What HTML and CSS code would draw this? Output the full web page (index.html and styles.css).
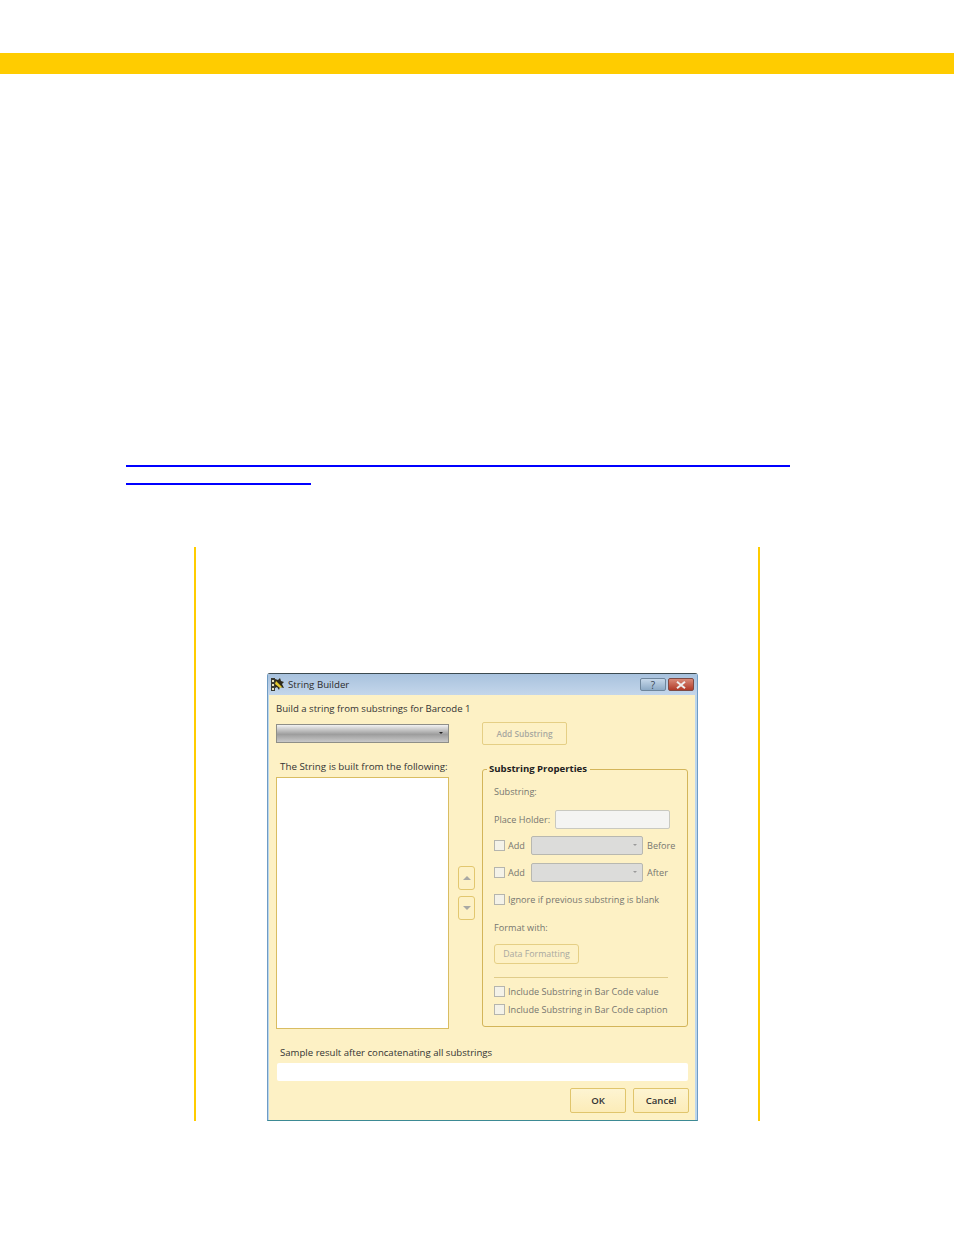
FILE: index.html
```html
<!DOCTYPE html>
<html lang="en">
<head>
<meta charset="utf-8">
<title>String Builder</title>
<link rel="stylesheet" href="styles.css">
</head>
<body>
<div class="band"></div>
<div class="links">
  <div class="link-line long"></div>
  <div class="link-line short"></div>
</div>
<section class="callout">
  <div class="dialog">
    <header class="titlebar">
      <svg class="app-icon" width="15" height="15" viewBox="0 0 15 15">
        <rect x="1" y="1" width="4" height="13" fill="#3a3a30"/>
        <rect x="2" y="3" width="2" height="2" fill="#e8e4c0"/>
        <rect x="2" y="7" width="2" height="2" fill="#e8e4c0"/>
        <rect x="2" y="11" width="2" height="2" fill="#e8e4c0"/>
        <path d="M5 2l3 1 2-2 1 3 3 1-2 2 2 4-4-1-1 3-2-3-2 1z" fill="#2d2a1c"/>
        <path d="M6 4l6 6-2 1-5-4z" fill="#e3c92e"/>
      </svg>
      <span class="title">String Builder</span>
      <div class="win-buttons">
        <div class="win-btn help">?</div>
        <div class="win-btn close">
          <svg width="12" height="8" viewBox="0 0 12 8"><path d="M2 0.8l8 6.4M10 0.8l-8 6.4" stroke="#eeeeee" stroke-width="2"/></svg>
        </div>
      </div>
    </header>
    <div class="content">
      <p class="intro">Build a string from substrings for Barcode 1</p>
      <div class="top-row">
        <div class="main-combo"><span class="caret dark"></span></div>
        <div class="btn add-btn">Add Substring</div>
      </div>
      <div class="columns">
        <div class="left-col">
          <p class="list-label">The String is built from the following:</p>
          <div class="listbox"></div>
        </div>
        <div class="arrows">
          <div class="arrow-btn"><span class="tri up"></span></div>
          <div class="arrow-btn"><span class="tri down"></span></div>
        </div>
        <div class="group">
          <span class="legend">Substring Properties</span>
          <p class="muted sub-label">Substring:</p>
          <div class="row ph-row">
            <span class="muted">Place Holder:</span>
            <div class="input"></div>
          </div>
          <div class="row add-row first">
            <span class="check"></span><span class="muted add-word">Add</span>
            <div class="combo"><span class="caret"></span></div>
            <span class="muted">Before</span>
          </div>
          <div class="row add-row">
            <span class="check"></span><span class="muted add-word">Add</span>
            <div class="combo"><span class="caret"></span></div>
            <span class="muted">After</span>
          </div>
          <div class="row ignore-row">
            <span class="check"></span><span class="muted">Ignore if previous substring is blank</span>
          </div>
          <p class="muted format-label">Format with:</p>
          <div class="btn format-btn">Data Formatting</div>
          <div class="rule"></div>
          <div class="row include-row">
            <span class="check"></span><span class="muted">Include Substring in Bar Code value</span>
          </div>
          <div class="row include-row">
            <span class="check"></span><span class="muted">Include Substring in Bar Code caption</span>
          </div>
        </div>
      </div>
      <p class="sample-label">Sample result after concatenating all substrings</p>
      <div class="sample-box"></div>
      <div class="actions">
        <div class="btn action">OK</div>
        <div class="btn action">Cancel</div>
      </div>
    </div>
  </div>
</section>
</body>
</html>
```
FILE: styles.css
```css
* { box-sizing: border-box; }
html, body { margin: 0; padding: 0; background: #fff; }
body {
  height: 1235px;
  overflow: hidden;
  font-family: "Open Sans", "Noto Sans", sans-serif;
  font-size: 9.6px;
  color: #3a3a34;
}
p { margin: 0; }

.band { margin-top: 53px; height: 21px; background: #ffcc00; }

.links { margin: 391px 0 0 126px; height: 82px; }
.link-line { height: 2px; background: #0000ff; }
.link-line.long { width: 664px; }
.link-line.short { width: 185px; margin-top: 16px; }

.callout {
  margin-left: 194px;
  width: 566px;
  height: 574px;
  padding: 126px 0 0 71px;
  border-left: 2px solid #ffcc00;
  border-right: 2px solid #ffcc00;
}

.dialog {
  width: 431px;
  height: 448px;
  display: flex;
  flex-direction: column;
  border: 1px solid #6f9cc4;
  border-top: 1px solid #3c4a50;
  border-bottom: 1px solid #3d8a94;
  border-radius: 3px 3px 0 0;
  background: #fdf1c5;
}

.titlebar {
  height: 21px;
  flex: none;
  display: flex;
  align-items: center;
  padding: 0 3px 0 2px;
  background: linear-gradient(#a8c2de, #c4d6ea);
}
.app-icon { flex: none; }
.title { margin-left: 3px; font-size: 9.7px; color: #2c2c2c; }
.win-buttons { margin-left: auto; display: flex; gap: 2px; }
.win-btn {
  height: 13px;
  display: flex;
  align-items: center;
  justify-content: center;
  border: 1px solid #6f869c;
  border-radius: 2px;
}
.win-btn.help { width: 26px; background: linear-gradient(#c6d8ea, #8daac6); color: #3a4654; font-size: 10px; line-height: 1; }
.win-btn.close { width: 26px; background: linear-gradient(#d98a78, #b13a28); border-color: #7f4a44; }

.content { flex: 1; padding: 7px 8px 0 8px; box-shadow: inset 1px 0 #bcd6ec, inset -2px 0 #bcd6ec; }
.intro { height: 13px; line-height: 13px; color: #333; }

.top-row { display: flex; margin-top: 7px; height: 24px; align-items: flex-start; }
.main-combo {
  width: 173px;
  height: 19px;
  margin-top: 2px;
  position: relative;
  border: 1px solid #8f8f88;
  background: linear-gradient(#f2f2f2, #9d9d9d 55%, #c9c9c9);
}
.caret {
  position: absolute;
  right: 5px;
  top: 7px;
  width: 0;
  height: 0;
  border: 2.5px solid transparent;
  border-top-color: #9a9a9a;
  border-bottom: 0;
}
.caret.dark { border-top-color: #222; }

.btn {
  display: flex;
  align-items: center;
  justify-content: center;
  border: 1px solid #e5cf85;
  border-radius: 2px;
  background: #fdf1c5;
}
.add-btn {
  width: 85px;
  height: 23px;
  margin-left: 33px;
  color: #a8a8a0;
  font-weight: 600;
  font-size: 8.3px;
}

.columns { display: flex; margin-top: 23px; height: 260px; }
.left-col { width: 173px; }
.list-label { height: 11px; line-height: 11px; margin-top: -8px; padding-left: 4px; color: #333; white-space: nowrap; font-size: 9.8px; }
.listbox { width: 173px; height: 252px; margin-top: 5px; background: #fff; border: 1px solid #d9bd62; }

.arrows { width: 17px; margin-left: 9px; padding-top: 97px; display: flex; flex-direction: column; gap: 6px; }
.arrow-btn {
  width: 17px;
  height: 24px;
  display: flex;
  align-items: center;
  justify-content: center;
  border: 1px solid #e2c76f;
  border-radius: 3px;
  background: #fdf1c5;
}
.tri { width: 0; height: 0; border: 4px solid transparent; }
.tri.up { border-top: 0; border-bottom: 4px solid #a9a9a4; }
.tri.down { border-bottom: 0; border-top: 4px solid #a9a9a4; }

.group {
  width: 206px;
  height: 258px;
  margin-left: 7px;
  position: relative;
  padding: 16px 0 0 11px;
  border: 1px solid #d3b55a;
  border-radius: 3px;
}
.legend {
  position: absolute;
  left: 4px;
  top: -7px;
  padding: 0 3px 0 2px;
  line-height: 11px;
  background: #fdf1c5;
  color: #222;
  font-weight: 700;
  font-size: 9.6px;
  white-space: nowrap;
}
.muted { color: #767670; font-size: 9.15px; white-space: nowrap; }
.sub-label { height: 12px; line-height: 12px; }

.row { display: flex; align-items: center; }
.ph-row { margin-top: 12px; height: 19px; }
.input { width: 115px; height: 19px; margin-left: 5px; background: #f4f4f2; border: 1px solid #c9c9c0; border-radius: 2px; }
.add-row { height: 19px; margin-top: 8px; }
.add-row.first { margin-top: 7px; }
.add-word { width: 23px; }
.check { flex: none; width: 11px; height: 11px; margin-right: 3px; background: #f4f2e8; border: 1px solid #b5b5ae; }
.combo { width: 112px; height: 19px; position: relative; margin-right: 4px; background: #dcdcda; border: 1px solid #b8b8b0; border-radius: 2px; }
.ignore-row { height: 12px; margin-top: 11px; }
.format-label { height: 12px; line-height: 12px; margin-top: 17px; }
.format-btn { width: 85px; height: 20px; margin-top: 10px; color: #a8a8a0; border-radius: 3px; font-size: 8.8px; }
.rule { width: 174px; height: 1px; margin-top: 13px; background: #e0cc8a; }
.include-row { height: 12px; margin-top: 6px; }
.rule + .include-row { margin-top: 7px; }

.sample-label { margin-top: 17px; padding-left: 4px; height: 13px; line-height: 13px; color: #333; }
.sample-box { width: 411px; height: 18px; margin: 4px 0 0 1px; background: #fff; border-radius: 2px; }
.actions { display: flex; justify-content: flex-end; gap: 7px; margin-top: 7px; }
.action { width: 56px; height: 25px; color: #333; font-weight: 600; border-color: #e0c56c; background: linear-gradient(#fdf4d2, #fcecb8); }
```
